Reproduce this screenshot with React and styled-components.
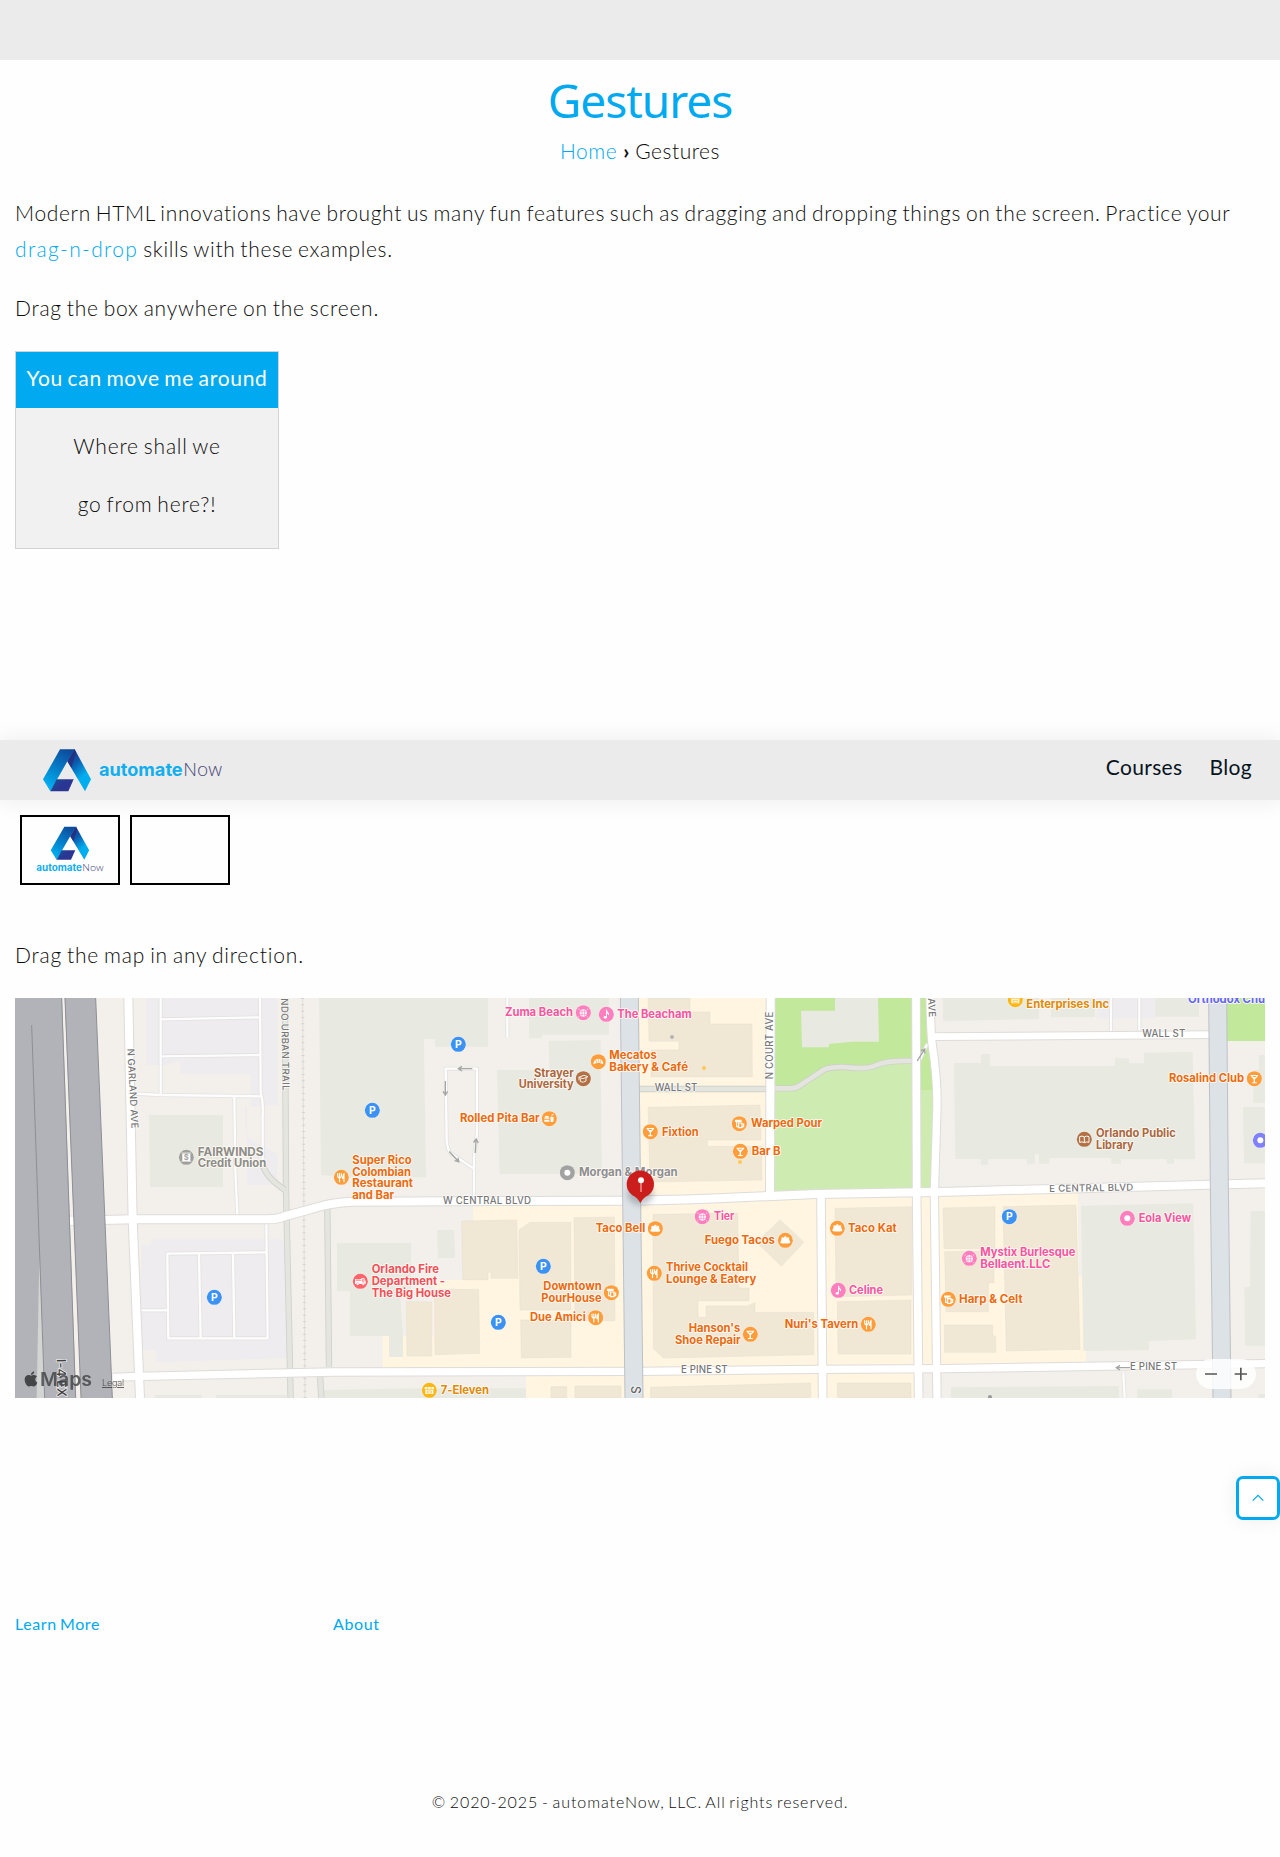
import React from "react";
import styled, { createGlobalStyle } from "styled-components";
import { FaApple } from "react-icons/fa";

const BLUE = "#00a9f0";

const GlobalStyle = createGlobalStyle`
  * { box-sizing: border-box; }
  body {
    margin: 0;
    background: #fefefe;
    color: #0c0c0c;
    font-family: Lato, "Open Sans", sans-serif;
    font-size: 21px;
    font-weight: 300;
    line-height: 36px;
    word-spacing: -1.5px;
    font-variant-ligatures: none;
  }
`;

const Page = styled.div`
  position: relative;
  display: flex;
  flex-direction: column;
  height: 1857px;
  overflow: hidden;
`;

const TopBar = styled.div`
  flex: none;
  height: 60px;
  background: #ebebeb;
`;

const TitleBlock = styled.header`
  display: flex;
  flex-direction: column;
  align-items: center;
  padding-top: 10px;
`;

const Title = styled.h1`
  margin: 0;
  color: ${BLUE};
  font: 400 46px/61px "Noto Sans", sans-serif;
  letter-spacing: -1px;
`;

const Breadcrumb = styled.nav`
  display: flex;
  gap: 6px;
  margin-top: 2px;
  letter-spacing: 0.5px;
`;

const Separator = styled.span`
  font-weight: 700;
  letter-spacing: 0;
`;

const Link = styled.a`
  color: ${BLUE};
  font-weight: ${(p) => p.$weight || 300};
  letter-spacing: ${(p) => p.$spacing || "inherit"};
`;

const Paragraph = styled.p`
  margin: ${(p) => p.$top}px 0 0;
  padding: 0 15px;
  letter-spacing: ${(p) => p.$spacing || 0.66}px;
`;

const MovableBox = styled.section`
  width: 264px;
  height: 198px;
  margin: 25px 0 0 15px;
  border: 1px solid #d3d3d3;
  background: #f1f1f1;
  text-align: center;
`;

const MovableHeader = styled.div`
  height: 56px;
  padding-top: 8px;
  background: ${BLUE};
  color: #fff;
  font-weight: 400;
  letter-spacing: 0.7px;
`;

const MovableLines = styled.div`
  display: flex;
  flex-direction: column;
  gap: 22px;
  padding-top: 20px;
  letter-spacing: 0.8px;
`;

const SiteHeader = styled.header`
  position: relative;
  z-index: 1;
  flex: none;
  display: flex;
  justify-content: space-between;
  align-items: center;
  height: 60px;
  margin-top: 191px;
  padding: 0 28px 0 40px;
  background: #ebebeb;
  box-shadow: 0 0 20px 3px rgba(0, 0, 0, 0.06);
`;

const Menu = styled.nav`
  display: flex;
  gap: 27px;
  padding-bottom: 6px;
  color: #08141e;
  font-weight: 400;
  letter-spacing: 0.35px;
`;

const HeaderLogo = styled.svg`
  width: 186.67px;
  height: 46.67px;
`;

const DropRow = styled.div`
  display: flex;
  gap: 10px;
  margin: 15px 0 0 20px;
`;

const DropTarget = styled.div`
  width: 100px;
  height: 70px;
  border: 2px solid #000;
`;

const DropLogo = styled.svg`
  display: block;
  width: 96px;
  height: 66px;
`;

const MapFrame = styled.section`
  flex: none;
  width: 1250px;
  height: 400px;
  margin: 25px 0 0 15px;
`;

const MapSvg = styled.svg`
  display: block;
  width: 100%;
  height: 100%;
  font-family: Inter, sans-serif;
  word-spacing: 0;
`;

const Poi = styled.text`
  font-size: 34px;
  font-weight: 700;
  stroke: #fffaf4;
  stroke-width: 5px;
  stroke-linejoin: round;
  paint-order: stroke;
`;

const Street = styled.text`
  font-size: ${(p) => p.$size || 29}px;
  font-weight: 500;
  fill: ${(p) => p.$color || "#777"};
  stroke: #fff;
  stroke-width: 5px;
  stroke-linejoin: round;
  stroke-opacity: 0.75;
  paint-order: stroke;
`;

const FooterLinks = styled.div`
  display: grid;
  grid-template-columns: 318px 318px;
  margin-top: 212px;
  padding-left: 15px;
  font-size: 16px;
  line-height: 28px;
  letter-spacing: 0.6px;
`;

const Copyright = styled.footer`
  margin-top: 150px;
  text-align: center;
  font-size: 16px;
  line-height: 28px;
  letter-spacing: 0.92px;
`;

const ScrollTop = styled.button`
  position: absolute;
  right: 0;
  top: 1476px;
  display: flex;
  align-items: center;
  justify-content: center;
  width: 44px;
  height: 44px;
  padding: 0;
  border: 3px solid ${BLUE};
  border-radius: 7px;
  background: #fff;
  box-shadow: 0 0 20px rgba(0, 0, 0, 0.07);
`;

function LogoMark({ id }) {
  return (
    <g>
      <defs>
        <linearGradient id={`${id}l`} x1="0.75" y1="0" x2="0.3" y2="1">
          <stop offset="0" stopColor="#0d4a9c" />
          <stop offset="0.45" stopColor="#0579c4" />
          <stop offset="0.95" stopColor="#00adef" />
        </linearGradient>
        <linearGradient id={`${id}r`} x1="0.2" y1="0" x2="0.7" y2="1">
          <stop offset="0" stopColor="#1c2f80" />
          <stop offset="0.3" stopColor="#0d57aa" />
          <stop offset="0.7" stopColor="#00adef" />
        </linearGradient>
        <linearGradient id={`${id}b`} x1="0" y1="0" x2="0.6" y2="0.3">
          <stop offset="0" stopColor="#15548f" />
          <stop offset="1" stopColor="#2b3594" />
        </linearGradient>
      </defs>
      <path d="M180 57H225L202 93L151 183L129 147Z" fill={`url(#${id}l)`} />
      <path d="M224 57L273 147L255 183L202 93Z" fill={`url(#${id}r)`} />
      <path d="M224 57L202 93L214 112L228 66Z" fill="#262b7c" opacity=".75" />
      <path d="M170 147H221L205 183H151Z" fill={`url(#${id}b)`} />
    </g>
  );
}

function Wordmark({ x, y, size, first, second }) {
  return (
    <g fontSize={size}>
      <text x={x} y={y} fontFamily="Inter, sans-serif" fontWeight="700" fill="#12aeef" textLength={first} lengthAdjust="spacingAndGlyphs">automate</text>
      <text x={x + first + size * 0.04} y={y} fontFamily="Open Sans, sans-serif" fontWeight="300" fill="#4b4a78" textLength={second} lengthAdjust="spacingAndGlyphs">Now</text>
    </g>
  );
}

/* Map units are thirds of a CSS pixel. */
const buildingFill = "#e8e9e0";
const shopFill = "#f0e7d5";

const parkingAreas = [
  "M438 24H832V345L735 352L738 440L832 492V585H741V352L752 345V253H541V212L500 225H438Z",
  "M422 766H453V748H855L860 1104L470 1117V1080H424Z",
  "M3292 24H3463V86H3292Z",
];

const buildings = [
  "M447 375H669V591H450Z",
  "M957 24H1464V170H1305V147H1272L1278 562H1040L963 555Z",
  "M1587 24H1827V134H1626V145H1587Z",
  "M1646 153L1802 150V240L1806 552H1499L1491 240H1648Z",
  "M1011 759H1233V903H1200L1209 1038V1101H1167V1038H1050V903H1011Z",
  "M1311 720H1362L1365 804H1314Z",
  "M465 1214H605V1224H465Z", "M648 1214H860V1224H648Z",
  "M970 1200L1260 1195H1578V1224H970Z",
  "M2828 24H3117V87L2829 93Z", "M3153 24H3285V82H3153Z", "M3465 24H3597V80H3465Z",
  "M2862 219H2943V192H2970V228H3345V205H3387V220H3432V188L3578 186L3585 508H3522V521H3500V508H3363V521H3334V504H3148V521H3117V492H3104V521H3081V507H2964V524H2943V507H2866Z",
  "M3243 647L3580 640L3588 1048L3447 1053V1080L3250 1083Z",
  "M3760 240H3777V195H3795V338H3760Z", "M3729 351H3795V520H3732Z",
  "M3752 663H3795V1067H3735L3733 890H3750Z",
  "M2853 1192L3357 1188V1224H2853Z", "M3412 1198H3516V1224H3412Z", "M3775 1212H3795V1224H3775Z",
];

const shops = [
  "M1944 24H2070V66H2130V102H2256L2257 260H1953V180H2037V154H1947Z",
  "M1944 352L2280 345L2283 450H2122V469H2284L2286 570L1950 576Z",
  "M1959 673L2213 670L2217 894H2247V932H2094V982H2118V948H2240L2265 938V967H2440L2442 1094L1990 1104L1960 1076Z",
  "M2340 689L2412 757L2344 829L2270 757Z",
  "M1385 693L1550 690L1554 865H1473V847H1464V869H1388Z",
  "M1557 720L1590 697H1712V960H1560Z",
  "M1722 683L1843 681L1845 992H1725Z",
  "M1562 990H1713V1102L1564 1104Z",
  "M1219 935L1295 936V1098H1221Z", "M1303 898H1436L1439 1090L1305 1094Z",
  "M2505 655L2735 650V915L2508 920Z", "M2512 935L2733 930V1092H2514Z",
  "M2829 654L2985 650V775L2832 776Z", "M2834 785L2982 783V878H2965V965H2838Z", "M2834 1005H2978V1036L2987 1040V1087H2834Z",
  "M3009 650L3228 645L3240 1078L3019 1083Z",
  "M1952 1192L2432 1179V1224H1952Z", "M2512 1179H2733V1224H2512Z",
  "M1653 1190H1700V1224H1653Z", "M1725 1188H1863V1224H1725Z",
];

const lanes = [
  "M482 24V314", "M484 88L779 82", "M484 199L780 195", "M780 24L782 310Q790 330 788 380V520",
  "M400 311L482 315L786 319", "M703 320L706 540L712 675", "M799 700L803 1046",
  "M799 787L502 791L505 1045H803", "M597 790L602 1045", "M699 790L703 1045", "M424 961H502",
  "M1422 536L1350 488Q1342 478 1340 450L1337 236H1431V430L1422 500V620",
  "M1522 24V142", "M3333 24V124", "M3418 24V122", "M2758 212L2782 162", "M3370 1148L3374 1224",
];

const roads = [
  { w: 24, d: "M385 24L398 690L420 1224" },
  { w: 24, d: "M210 692L400 688H805Q830 688 850 680L930 658Q990 637 1060 635L1880 632Q2060 630 2220 622L2450 612L2850 605L3795 580" },
  { w: 22, d: "M338 1162L420 1159L1000 1146L1920 1144L2450 1138L2830 1136L3795 1121" },
  { w: 24, d: "M2312 24L2310 608" },
  { w: 23, d: "M2463 618L2468 1224" },
  { w: 23, d: "M2748 24L2750 620L2756 1224" },
  { w: 22, d: "M2790 24Q2792 120 2796 160Q2812 260 2811 350L2803 610L2811 1224" },
  { w: 20, d: "M2800 140L3635 134" },
];

const pois = [
  [593, 498, 197, "FAIRWINDS", "#8c8d88"], [593, 532, 206, "Credit Union", "#8c8d88"],
  [1515, 79, 204, "Zuma Beach", "#f8549f"], [1852, 84, 223, "The Beacham", "#f8549f"],
  [1828, 207, 142, "Mecatos", "#eb6a0e"], [1828, 243, 236, "Bakery & Café", "#eb6a0e"],
  [1602, 260, 119, "Strayer", "#a9673e"], [1556, 294, 165, "University", "#a9673e"],
  [1380, 396, 239, "Rolled Pita Bar", "#eb6a0e"],
  [1057, 522, 178, "Super Rico", "#eb6a0e"], [1057, 557, 176, "Colombian", "#eb6a0e"],
  [1057, 591, 182, "Restaurant", "#eb6a0e"], [1057, 626, 125, "and Bar", "#eb6a0e"],
  [1737, 557, 296, "Morgan & Morgan", "#8e8e90"],
  [1787, 726, 149, "Taco Bell", "#eb6a0e"],
  [1115, 850, 202, "Orlando Fire", "#ef5059"], [1115, 885, 220, "Department -", "#ef5059"], [1115, 920, 238, "The Big House", "#ef5059"],
  [1630, 901, 175, "Downtown", "#eb6a0e"], [1624, 936, 181, "PourHouse", "#eb6a0e"],
  [1590, 994, 167, "Due Amici", "#eb6a0e"], [1322, 1212, 145, "7-Eleven", "#de8a0b"],
  [1986, 437, 110, "Fixtion", "#eb6a0e"], [2253, 410, 213, "Warped Pour", "#eb6a0e"], [2255, 494, 87, "Bar B", "#eb6a0e"],
  [2142, 689, 61, "Tier", "#f8549f"], [2114, 761, 211, "Fuego Tacos", "#eb6a0e"],
  [1998, 843, 246, "Thrive Cocktail", "#eb6a0e"], [1998, 879, 271, "Lounge & Eatery", "#eb6a0e"],
  [2066, 1026, 155, "Hanson's", "#eb6a0e"], [2025, 1061, 197, "Shoe Repair", "#eb6a0e"],
  [2354, 1013, 221, "Nuri's Tavern", "#eb6a0e"], [2544, 725, 146, "Taco Kat", "#eb6a0e"], [2547, 912, 102, "Celine", "#f8549f"],
  [2877, 939, 191, "Harp & Celt", "#eb6a0e"],
  [2941, 799, 285, "Mystix Burlesque", "#f8549f"], [2941, 834, 210, "Bellaent.LLC", "#f8549f"],
  [3416, 695, 157, "Eola View", "#f8549f"],
  [3288, 442, 239, "Orlando Public", "#a9673e"], [3288, 477, 113, "Library", "#a9673e"],
  [3507, 276, 225, "Rosalind Club", "#eb6a0e"],
  [3079, 55, 248, "Enterprises Inc", "#de8a0b"],
  [3564, 38, 231, "Orthodox Chu", "#6166f5"],
];

const streets = [
  [1329, 642, 264, "W CENTRAL BLVD", 0], [1964, 303, 128, "WALL ST", 0], [2043, 1149, 140, "E PINE ST", 0],
  [3427, 140, 129, "WALL ST", 0], [3148, 606, 252, "E CENTRAL BLVD", -1], [3390, 1139, 141, "E PINE ST", 0],
  [382, 176, 240, "N GARLAND AVE", 87], [2319, 268, 203, "N COURT AVE", -90],
  [843, 25, 277, "NDO URBAN TRAIL", 89], [2784, 25, 57, "AVE", 87],
];

const markers = [
  [559, 502, "#a0a19c", "bank"], [643, 922, "#3b92f3", "parking"],
  [1375, 163, "#3b92f3", "parking"], [1117, 361, "#3b92f3", "parking"], [1630, 829, "#3b92f3", "parking"],
  [1495, 997, "#3b92f3", "parking"], [3028, 680, "#3b92f3", "parking"],
  [1750, 68, "#ff7fbe", "disco"], [1819, 73, "#ff7fbe", "note"], [1795, 215, "#ff9d3b", "pastry"],
  [1750, 266, "#b37044", "school"], [1648, 386, "#ff9d3b", "fastfood"], [1024, 562, "#ff9d3b", "fork"],
  [1702, 548, "#a2a2a2", "dot"], [1966, 716, "#ff9d3b", "taco"], [1081, 874, "#ff646b", "truck"],
  [1834, 908, "#ff9d3b", "beer"], [1787, 983, "#ff9d3b", "fork"], [1288, 1201, "#fdb714", "store"],
  [1951, 425, "#ff9d3b", "cocktail"], [2218, 401, "#ff9d3b", "beer"], [2221, 484, "#ff9d3b", "cocktail"],
  [2107, 680, "#ff7fbe", "disco"], [2356, 751, "#ff9d3b", "taco"], [1963, 850, "#ff9d3b", "fork"],
  [2251, 1033, "#ff9d3b", "cocktail"], [2605, 1003, "#ff9d3b", "fork"], [2512, 715, "#ff9d3b", "taco"],
  [2515, 901, "#ff7fbe", "note"], [2845, 928, "#ff9d3b", "beer"], [2908, 805, "#ff7fbe", "disco"],
  [3382, 685, "#ff7fbe", "dot"], [3253, 448, "#b37044", "book"], [3763, 266, "#ff9d3b", "cocktail"],
  [3046, 29, "#fdb714", "store"], [3781, 451, "#8080fb", "dot"],
];

function Glyph({ kind, color }) {
  switch (kind) {
    case "parking":
      return <text y="11" textAnchor="middle" fontSize="31" fontWeight="700" fill="#fff">P</text>;
    case "dot":
      return <circle r="9" fill="#fff" />;
    case "cocktail":
      return <path d="M-11 -11H11V-8L2 2V11H7V14H-7V11H-2V2L-11 -8ZM-6 -8L-3 -5H3L6 -8Z" fill="#fff" fillRule="evenodd" />;
    case "fork":
      return (
        <g fill="none" stroke="#fff" strokeWidth="3.4" strokeLinecap="round">
          <path d="M-11 -11V-4Q-11 1 -5 1Q0 1 0 -4V-11M-5.5 -11V13" />
          <path d="M8 13V-11Q3 -7 4 3H8" fill="#fff" />
        </g>
      );
    case "beer":
      return (
        <g fill="none" stroke="#fff" strokeWidth="3.4">
          <path d="M-13 -10H7M-13 -7H7M-8 -7V9H-4M-3 -3V-6" />
          <path d="M-2 -2H8V12H-2ZM8 1H13V9H8" />
        </g>
      );
    case "taco":
      return (
        <g fill="#fff">
          <path d="M-15 8Q-14 -6 0 -6Q14 -6 15 8Q0 11 -15 8Z" />
          <circle cx="-8" cy="-5" r="4" /><circle cx="0" cy="-8" r="4" /><circle cx="8" cy="-5" r="4" />
        </g>
      );
    case "note":
      return (
        <g fill="#fff">
          <ellipse cx="-3" cy="9" rx="5" ry="4" />
          <path d="M-1 9V-14H2Q2 -8 8 -3Q9 1 6 3Q5 -2 2 -4V9Z" />
        </g>
      );
    case "disco":
      return (
        <g>
          <circle cy="1" r="11" fill="#fff" />
          <path d="M-11 -3H11M-11 5H11M-4 -10V12M4 -10V12" stroke={color} strokeWidth="1.8" />
          <path d="M-13 -8V-12M13 -8V-12M-14 11V14M13 11V14" stroke="#fff" strokeWidth="2" />
        </g>
      );
    case "pastry":
      return (
        <g>
          <path d="M-15 8Q-14 -8 0 -9Q14 -8 15 8L7 5Q0 1 -7 5Z" fill="#fff" />
          <path d="M-8 -7L-5 4M0 -9V2M8 -7L5 4" stroke={color} strokeWidth="2" />
        </g>
      );
    case "school":
      return (
        <g fill="none" stroke="#fff" strokeWidth="2.6">
          <path d="M-14 -4L2 -10L14 -6L-1 0ZM-9 -1V9Q0 13 8 7V-3M-13 -3V5" />
        </g>
      );
    case "fastfood":
      return (
        <g fill="#fff">
          <path d="M-15 -3Q-14 -9 -8 -9Q-1 -9 0 -3ZM-15 -1H0V2H-15ZM-15 4H0V9H-15ZM3 -5H13L12 10H4Z" />
          <path d="M7 -6L9 -13H13" fill="none" stroke="#fff" strokeWidth="2.4" />
        </g>
      );
    case "truck":
      return (
        <g>
          <path d="M-16 -7H3V-9H12L16 0V8H-16Z" fill="#fff" />
          <path d="M-14 -3H3M-10 -7V-3M-4 -7V-3M6 -5H11V0H6Z" stroke={color} strokeWidth="2" fill="none" />
          <circle cx="-8" cy="8" r="4" fill="#fff" stroke={color} /><circle cx="9" cy="8" r="4" fill="#fff" stroke={color} />
        </g>
      );
    case "store":
      return (
        <g>
          <path d="M-13 -10H13L15 -3H12V11H-12V-3H-15Z" fill="#fff" />
          <path d="M-15 -3H15M-7 2H7V8H-7Z M-5 -10V-3M5 -10V-3" fill="none" stroke={color} strokeWidth="2" />
        </g>
      );
    case "book":
      return <path d="M0 -7Q-7 -12 -14 -8V9Q-7 6 0 10Q7 6 14 9V-8Q7 -12 0 -7ZM0 -7V10" fill="none" stroke="#fff" strokeWidth="3" />;
    default:
      return (
        <g>
          <rect x="-12" y="-11" width="24" height="22" fill="#fff" />
          <path d="M-15 -13H15M-15 12H15" stroke="#fff" strokeWidth="2" />
          <text y="9" textAnchor="middle" fontSize="23" fontWeight="600" fill={color}>$</text>
        </g>
      );
  }
}

function Arrow({ x, y, angle, length = 42 }) {
  return (
    <path
      d={`M${-length / 2} 0H${length / 2}M${length / 2 - 11} -7L${length / 2} 0L${length / 2 - 11} 7`}
      transform={`translate(${x} ${y}) rotate(${angle})`}
      fill="none" stroke="#a5a5a3" strokeWidth="4"
    />
  );
}

function CityMap() {
  return (
    <MapFrame>
      <MapSvg viewBox="45 24 3750 1200">
        <defs>
          <filter id="pinShadow" x="-50%" y="-50%" width="200%" height="200%">
            <feGaussianBlur stdDeviation="9" />
          </filter>
        </defs>
        <rect x="45" y="24" width="3750" height="1200" fill="#f3f0eb" />

        <g fill="#fff5e1">
          <path d="M1915 24H2748V1224H1578V1148H1148V1038H1167V1101H1209V1038H1300V870H1420V645H1915Z" />
          <path d="M2750 610L3233 600L3236 860H3246L3260 1130H2760Z" />
        </g>
        <g fill="#eeecee">{parkingAreas.map((d) => <path key={d} d={d} />)}</g>
        <g fill={buildingFill}>{buildings.map((d) => <path key={d} d={d} />)}</g>
        <path d="M2325 24H2790L2810 300L2805 600L2323 606Z" fill="#ceebb1" />
        <path d="M2325 24H2740V212Q2670 212 2620 232Q2570 240 2500 230Q2450 240 2400 278Q2370 300 2325 296Z" fill="#c1e89b" />
        <path d="M2760 24H2785L2800 300H2760Z" fill="#c1e89b" />
        <path d="M2403 62H2505V24H2634L2637 155H2556L2487 162V172H2406Z" fill={buildingFill} />
        <path d="M3680 24H3795V153H3681Z" fill="#c1e89b" />
        <g fill={shopFill} stroke="#e6dfd2" strokeWidth="1.5">{shops.map((d) => <path key={d} d={d} />)}</g>

        <g fill="none">
          {["M855 24L858 600L872 1224", "M790 525Q795 560 855 600", "M982 655L987 1130", "M960 1155L964 1224", "M1918 297H2300",
            "M2325 295H2375Q2390 294 2405 283L2470 240Q2490 230 2530 231Q2600 240 2630 225Q2660 211 2740 213"].map((d) => (
            <g key={d}>
              <path d={d} stroke="#cfd1ca" strokeWidth="19" />
              <path d={d} stroke="#e3e5de" strokeWidth="14" />
            </g>
          ))}
          <path d="M908 24L915 1224" stroke="#e2deda" strokeWidth="3" />
          <path d="M908 24L915 1224" stroke="#d6d2ce" strokeWidth="9" strokeDasharray="3 16" />
          {lanes.map((d) => <path key={d} d={d} stroke="#e3e2e1" strokeWidth="12" />)}
          {lanes.map((d) => <path key={d} d={d} stroke="#fdfdfd" strokeWidth="7" />)}
          {roads.map((r) => <path key={r.d} d={r.d} stroke="#dedcd9" strokeWidth={r.w + 6} />)}
          {roads.map((r) => <path key={r.d} d={r.d} stroke="#fff" strokeWidth={r.w} />)}
          {["M1888 24L1895 632L1902 1224", "M3653 24L3658 585L3666 1224"].map((d) => (
            <g key={d}>
              <path d={d} stroke="#bcc1c6" strokeWidth="57" />
              <path d={d} stroke="#dde2e6" strokeWidth="51" />
            </g>
          ))}
        </g>

        <path d="M45 24H186L228 1224H45Z" fill="#b2b3b8" />
        <path d="M194 24H287L337 1224H243Z" fill="#b2b3b8" />
        <path d="M118 800L135 1224H110Z" fill="#d3d5d3" />
        <path d="M211 680H221V705H212Z" fill="#fff" />
        <path d="M95 105L134 1224M185 24L227 1224M195 24L243 1224M287 24L337 1224" fill="none" stroke="#8e8f94" strokeWidth="3" />

        <Arrow x={1396} y={236} angle={180} />
        <Arrow x={1336} y={294} angle={90} />
        <Arrow x={1362} y={500} angle={47} />
        <Arrow x={1427} y={468} angle={-86} />
        <Arrow x={2763} y={195} angle={-57} />
        <Arrow x={3370} y={1133} angle={180} />
        <circle cx="2016" cy="141" r="6" fill="#b4b4b4" />
        <circle cx="2112" cy="234" r="6" fill="#ffc657" />
        <circle cx="2220" cy="516" r="6" fill="#ffc657" />
        <circle cx="2970" cy="1221" r="6" fill="#999" />

        {streets.map(([x, y, w, name, angle]) => (
          <Street key={name + x} transform={`translate(${x} ${y}) rotate(${angle})`} textLength={w}>{name}</Street>
        ))}
        <Street $size={38} $color="#3f3f3f" transform="translate(170 1107) rotate(89)" textLength="114">I-4 EX</Street>
        <Street $size={38} $color="#666" transform="translate(1892 1187) rotate(90)">S</Street>

        {pois.map(([x, y, w, name, color]) => (
          <Poi key={name} x={x} y={y} fill={color} textLength={w} lengthAdjust="spacingAndGlyphs">{name}</Poi>
        ))}
        {markers.map(([x, y, color, kind]) => (
          <g key={`${x}-${y}`} transform={`translate(${x} ${y})`}>
            <circle r="23.5" fill="#fff" opacity=".6" />
            <circle r="22.5" fill={color} />
            <Glyph kind={kind} color={color} />
          </g>
        ))}

        <ellipse cx="1921" cy="612" rx="38" ry="32" fill="#5a6470" opacity=".4" filter="url(#pinShadow)" />
        <path d="M1921 639Q1912 622 1897 616A41 41 0 1 1 1945 616Q1930 622 1921 639Z" fill="#cb1d1b" />
        <path d="M1923 578V606" stroke="#eba6a4" strokeWidth="4" />
        <circle cx="1923" cy="571" r="9" fill="#fff" />

        <g opacity=".8">
          <FaApple x={67} y={1141} size={52} color="#2b2b2b" />
          <text x="120" y="1188" fontSize="56" fontWeight="600" fill="#404042" textLength="156" lengthAdjust="spacingAndGlyphs">Maps</text>
          <text x="306" y="1188" fontSize="27" fill="#333" textLength="66" textDecoration="underline">Legal</text>
        </g>

        <rect x="3588" y="1107" width="180" height="90" rx="45" fill="#fff" opacity=".82" />
        <path d="M3615 1152H3651M3704 1152H3741M3722.500 1133V1171" stroke="#555" strokeWidth="5" fill="none" />
      </MapSvg>
    </MapFrame>
  );
}

export default function App() {
  return (
    <Page>
      <GlobalStyle />
      <TopBar />
      <TitleBlock>
        <Title>Gestures</Title>
        <Breadcrumb>
          <Link>Home</Link>
          <Separator>›</Separator>
          <span>Gestures</span>
        </Breadcrumb>
      </TitleBlock>
      <Paragraph $top={26}>
        Modern HTML innovations have brought us many fun features such as dragging and dropping things on the screen. Practice your{" "}
        <Link $spacing="1.35px">drag-n-drop</Link> skills with these examples.
      </Paragraph>
      <Paragraph $top={23} $spacing={0.76}>Drag the box anywhere on the screen.</Paragraph>
      <MovableBox>
        <MovableHeader>You can move me around</MovableHeader>
        <MovableLines>
          <span>Where shall we</span>
          <span>go from here?!</span>
        </MovableLines>
      </MovableBox>

      <SiteHeader>
        <HeaderLogo viewBox="120 50 560 140">
          <LogoMark id="head" />
          <Wordmark x={297} y={137} size={53} first={251} second={116} />
        </HeaderLogo>
        <Menu>
          <span>Courses</span>
          <span>Blog</span>
        </Menu>
      </SiteHeader>

      <DropRow>
        <DropTarget>
          <DropLogo viewBox="66 261 288 198">
            <g transform="translate(49 245.500) scale(0.8 0.785)">
              <LogoMark id="drop" />
            </g>
            <Wordmark x={109} y={423} size={28} first={137} second={64} />
          </DropLogo>
        </DropTarget>
        <DropTarget />
      </DropRow>

      <Paragraph $top={52} $spacing={0.8}>Drag the map in any direction.</Paragraph>
      <CityMap />

      <FooterLinks>
        <Link $weight={400}>Learn More</Link>
        <Link $weight={400}>About</Link>
      </FooterLinks>
      <Copyright>© 2020-2025 - automateNow, LLC. All rights reserved.</Copyright>

      <ScrollTop aria-label="Scroll to top">
        <svg width="12" height="8" viewBox="0 0 12 8">
          <path d="M0.700 6.700L6 1.400L11.300 6.700" fill="none" stroke={BLUE} strokeWidth="1.200" />
        </svg>
      </ScrollTop>
    </Page>
  );
}
